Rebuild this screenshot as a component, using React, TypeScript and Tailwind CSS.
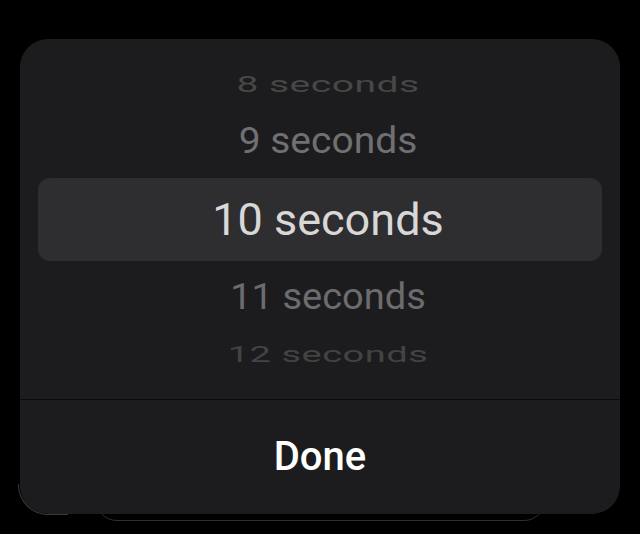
import React from "react";

/* Wheel picker sheet: seconds selector with Done button */

const font = { fontFamily: "Roboto, 'Liberation Sans', sans-serif" };

const App = () => {
    return (
        <div className="relative w-[640px] h-[534px] bg-black overflow-hidden" style={font}>
            {/* content behind the sheet */}
            <div className="absolute left-[95px] top-[460px] w-[451px] h-[61px] rounded-b-[22px] border border-[#2f2f2f] z-0" />
            <div className="absolute left-[18px] top-[484px] w-[50px] h-[31px] rounded-bl-[30px] border-l border-b border-[#3a3a3a] z-0" />

            {/* sheet */}
            <div className="relative z-10 mx-[20px] mt-[39px] h-[475px] rounded-[28px] bg-[#1c1c1e] flex flex-col overflow-hidden">
                {/* picker wheel */}
                <div className="h-[360px] px-[18px] flex flex-col">
                    <div className="h-[28px]" />
                    <div className="h-[36px] pl-[16px] flex items-center justify-center">
                        <span className="text-[39px] leading-none text-[#474747] scale-y-[0.55] tracking-[0.5px]">8 seconds</span>
                    </div>
                    <div className="h-[75px] pl-[16px] flex items-center justify-center pt-[2px]">
                        <span className="text-[39px] leading-none text-[#707072] scale-y-[0.95]">9 seconds</span>
                    </div>
                    <div className="h-[83px] pl-[16px] rounded-[12px] bg-[#2e2e30] flex items-center justify-center">
                        <span className="text-[45px] leading-none text-[#d8d8d8]">10 seconds</span>
                    </div>
                    <div className="h-[72px] pl-[16px] flex items-center justify-center">
                        <span className="text-[38px] leading-none text-[#6c6c6e] scale-y-[0.95]">11 seconds</span>
                    </div>
                    <div className="h-[42px] pl-[16px] flex items-center justify-center">
                        <span className="text-[38px] leading-none text-[#434343] scale-y-[0.58] tracking-[0.5px]">12 seconds</span>
                    </div>
                    <div className="flex-1" />
                </div>

                {/* divider */}
                <div className="h-px bg-[#0b0b0b]" />

                {/* action */}
                <button className="flex-1 flex items-center justify-center text-white text-[40px] font-medium leading-none">
                    Done
                </button>
            </div>
        </div>
    );
};

export default App;
